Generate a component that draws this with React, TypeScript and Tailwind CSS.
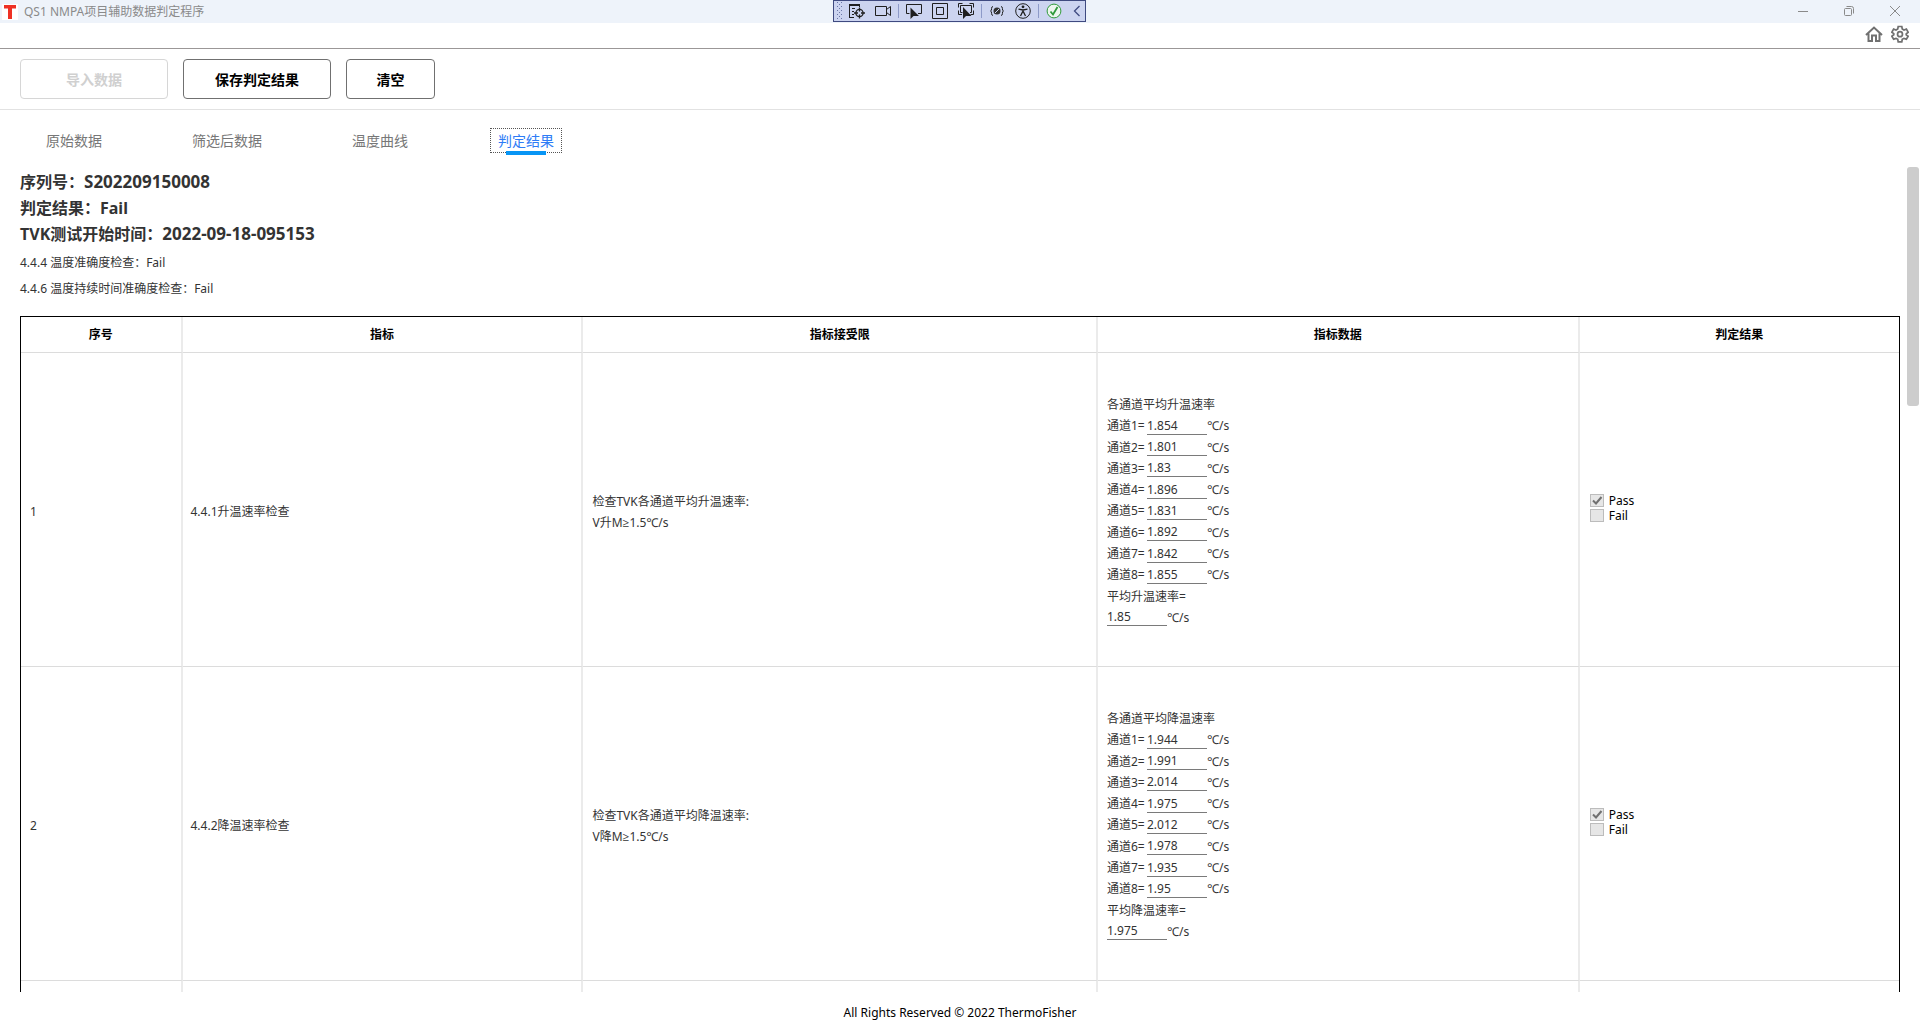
import type { ReactNode } from 'react';

const cjk = "font-['Noto_Sans','Open_Sans','Noto_Sans_CJK_SC',sans-serif]";

type Row = {
  id: number;
  name: string;
  limit: string[];
  title: string;
  values: string[];
  avgLabel: string;
  avg: string;
};

const rows: Row[] = [
  {
    id: 1,
    name: '4.4.1升温速率检查',
    limit: ['检查TVK各通道平均升温速率:', 'V升M≥1.5℃/s'],
    title: '各通道平均升温速率',
    values: ['1.854', '1.801', '1.83', '1.896', '1.831', '1.892', '1.842', '1.855'],
    avgLabel: '平均升温速率=',
    avg: '1.85',
  },
  {
    id: 2,
    name: '4.4.2降温速率检查',
    limit: ['检查TVK各通道平均降温速率:', 'V降M≥1.5℃/s'],
    title: '各通道平均降温速率',
    values: ['1.944', '1.991', '2.014', '1.975', '2.012', '1.978', '1.935', '1.95'],
    avgLabel: '平均降温速率=',
    avg: '1.975',
  },
];

function ToolButton({ label, children }: { label: string; children: ReactNode }) {
  return (
    <button type="button" aria-label={label} className="flex h-[18px] w-[26px] shrink-0 items-center justify-center">
      {children}
    </button>
  );
}

function ToolDivider() {
  return <span className="mx-[2px] h-[14px] w-px shrink-0 bg-[#8d9ac8]" />;
}

const toolSvg = { width: 18, height: 18, viewBox: '0 0 18 18', fill: 'none', stroke: '#1f1f1f' };

function DebugToolbar() {
  return (
    <div className="absolute top-0 left-[833px] flex h-[22px] w-[253px] items-center overflow-hidden border border-[#3f4a80] bg-[#ccd4f0] pl-[3px]">
      <svg className="mr-[1px] shrink-0" width="6" height="18" viewBox="0 0 6 18" fill="#6b76a6">
        {[0, 4, 8, 12, 16].map((y) => (
          <g key={y}>
            <rect x="0" y={y} width="1" height="1" />
            <rect x="4" y={y} width="1" height="1" />
            <rect x="2" y={y + 2} width="1" height="1" />
          </g>
        ))}
      </svg>
      <ToolButton label="Live Visual Tree">
        <svg {...toolSvg}>
          <path d="M1.500 15.500V2.500H11.500V5" />
          <path d="M1 3H12" strokeWidth="2" />
          <path d="M4 6.500H7M4 9.500H6M4 12.500H6M1 15.500H6" />
          <circle cx="11.500" cy="11" r="3.600" strokeWidth="1.300" />
          <path d="M11.500 5.500V9.500M11.500 12.500V16.500M6 11H10M13 11H17" strokeWidth="1.300" />
        </svg>
      </ToolButton>
      <ToolButton label="Record">
        <svg {...toolSvg}>
          <path d="M1.500 4.500H12.500V13.500H1.500Z" />
          <path d="M12.500 7.500L16.500 4.500V13.500L12.500 10.500" />
        </svg>
      </ToolButton>
      <ToolDivider />
      <ToolButton label="Select element">
        <svg {...toolSvg}>
          <path d="M4.500 11.500H1.500V2.500H16.500V11.500H13" />
          <path d="M5.500 5.500V17L8.500 14H14Z" fill="#1f1f1f" stroke="none" />
        </svg>
      </ToolButton>
      <ToolButton label="Layout adorners">
        <svg {...toolSvg}>
          <path d="M1.500 1.500H16.500V16.500H1.500ZM5.500 5.500H12.500V12.500H5.500Z" />
        </svg>
      </ToolButton>
      <ToolButton label="Track focused element">
        <svg {...toolSvg}>
          <path d="M1.500 5.500V1.500H5.500M12.500 1.500H16.500V5.500M1.500 8.500V12.500H5M16.500 8.500V12.500H13.500M5.500 10.500H3.500V3.500H14.500V10.500H13" />
          <path d="M6 5V17L9 14H14.500Z" fill="#1f1f1f" stroke="none" />
        </svg>
      </ToolButton>
      <ToolDivider />
      <ToolButton label="Binding failures">
        <svg {...toolSvg}>
          <path d="M5 4.500C2.500 4.500 4.500 8.500 2.500 9C4.500 9.500 2.500 13.500 5 13.500M13 4.500C15.500 4.500 13.500 8.500 15.500 9C13.500 9.500 15.500 13.500 13 13.500" />
          <circle cx="9" cy="9" r="3.500" fill="#333" stroke="none" />
          <path d="M7 11L11 7" stroke="#ccd4f0" />
        </svg>
      </ToolButton>
      <ToolButton label="Accessibility">
        <svg {...toolSvg}>
          <circle cx="9" cy="9" r="7.300" />
          <circle cx="9" cy="4.800" r="1.400" fill="#1f1f1f" stroke="none" />
          <path d="M4.500 7.200L9 8L13.500 7.200M9 7.500V10.500M6.500 14L8.500 10H9.500L11.500 14" strokeWidth="1.300" />
        </svg>
      </ToolButton>
      <ToolDivider />
      <ToolButton label="Hot reload">
        <svg {...toolSvg} stroke="#2f9a3a">
          <circle cx="9" cy="9" r="6.900" fill="#edf6ee" />
          <path d="M5.500 9.500L8 12.500L12.500 5" strokeWidth="1.800" />
        </svg>
      </ToolButton>
      <button type="button" aria-label="Collapse" className="flex h-[18px] w-[20px] shrink-0 items-center justify-center">
        <svg {...toolSvg} stroke="#3f4a80">
          <path d="M11.500 4L6.500 9L11.500 14" strokeWidth="1.300" />
        </svg>
      </button>
    </div>
  );
}

function TitleBar() {
  return (
    <header className="relative flex h-[23px] shrink-0 items-center bg-[#eef3fa] pr-[2px] pl-[2px]">
      <svg width="16" height="16" viewBox="0 0 16 16">
        <rect width="16" height="16" fill="#fff" />
        <path d="M2 1H14V4.500H10V15H6V4.500H2Z" fill="#ee3124" />
      </svg>
      <h1 className="ml-[6px] text-[12px] leading-[16px] text-[#8a8a8a]">QS1 NMPA项目辅助数据判定程序</h1>
      <DebugToolbar />
      <div className="ml-auto flex h-full pb-[2px] text-[#8a8a8a]">
        <button type="button" aria-label="Minimize" className="flex w-[46px] items-center justify-center">
          <svg width="10" height="10" viewBox="0 0 10 10" stroke="currentColor"><path d="M0 5.500H10" /></svg>
        </button>
        <button type="button" aria-label="Restore" className="flex w-[46px] items-center justify-center">
          <svg width="10" height="10" viewBox="0 0 10 10" fill="none" stroke="currentColor">
            <rect x="0.500" y="2.500" width="7" height="7" rx="1" />
            <path d="M2.500 0.500H7.500Q9.500 0.500 9.500 2.500V7.500" />
          </svg>
        </button>
        <button type="button" aria-label="Close" className="flex w-[46px] items-center justify-center">
          <svg width="10" height="10" viewBox="0 0 10 10" stroke="currentColor"><path d="M0 0L10 10M10 0L0 10" /></svg>
        </button>
      </div>
    </header>
  );
}

function Reading({ id, label, value }: { id: string; label?: string; value: string }) {
  return (
    <div className="flex items-center">
      {label && <label htmlFor={id} className="w-[40px] whitespace-nowrap">{label}</label>}
      <input
        id={id}
        aria-label={label ? undefined : '平均'}
        readOnly
        defaultValue={value}
        className="h-[17px] w-[60px] border-b border-[#7a7a7a] bg-transparent pb-[1px] outline-none"
      />
      <span>℃/s</span>
    </div>
  );
}

function Verdict({ label, checked }: { label: string; checked: boolean }) {
  return (
    <label className="flex h-[15px] items-center gap-[5px] text-black">
      <span className="relative flex size-[14px]">
        <input
          type="checkbox"
          disabled
          defaultChecked={checked}
          className="h-[13px] w-[14px] appearance-none border border-[#bcbcbc] bg-[#e6e6e6]"
        />
        {checked && (
          <svg className="absolute top-0 left-0" width="14" height="13" viewBox="0 0 14 13" fill="none" stroke="#707070" strokeWidth="2">
            <path d="M3 6.500L6 9.500L11.500 3" />
          </svg>
        )}
      </span>
      {label}
    </label>
  );
}

export default function App() {
  const divider = 'border-r-2 border-b border-r-[#ebebeb] border-b-[#dcdcdc]';
  const lastCol = 'border-b border-b-[#dcdcdc]';
  return (
    <div className={`${cjk} flex h-screen flex-col overflow-hidden bg-white text-[12px] leading-[16px] text-[#333]`}>
      <TitleBar />
      <div className="flex h-[26px] shrink-0 items-center justify-end gap-[8px] border-b border-[#9b9797] pr-[11px] pb-[3px] text-[#707070]">
        <button type="button" aria-label="Home">
          <svg width="18" height="18" viewBox="0 0 18 18" fill="none" stroke="currentColor" strokeWidth="2">
            <path d="M1 10L9 2.500L17 10M3.500 8.500V16H7V10.500H11V16H14.500V8.500" />
          </svg>
        </button>
        <button type="button" aria-label="Settings">
          <svg width="18" height="18" viewBox="0 0 24 24" fill="none" stroke="currentColor" strokeWidth="2.300">
            <path d="M9.600 2H14.400L15 5.300L17.300 6.600L20.500 5.500L22.900 9.600L20.300 11.800V13.200L22.900 14.900L20.500 18.900L17.300 17.800L15 19.100L14.400 22.500H9.600L9 19.100L6.700 17.800L3.500 18.900L1.100 14.900L3.700 13V11.500L1.100 9.600L3.500 5.500L6.700 6.600L9 5.300Z" />
            <circle cx="12" cy="12.200" r="3.300" />
          </svg>
        </button>
      </div>
      <div className="flex h-[61px] shrink-0 items-center gap-[15px] border-b border-[#e2e2e2] px-[20px] text-[14px] font-bold">
        <button type="button" disabled className="h-[40px] w-[148px] rounded-[4px] border border-[#d6d6d6] pt-[2px] text-[#d0d0d0]">导入数据</button>
        <button type="button" className="h-[40px] w-[148px] rounded-[4px] border border-[#707070] pt-[2px] text-black">保存判定结果</button>
        <button type="button" className="h-[40px] w-[89px] rounded-[4px] border border-[#707070] pt-[2px] text-black">清空</button>
      </div>
      <nav className="flex h-[57px] shrink-0 items-center pt-[4px] pl-[38px] text-[14px] leading-[20px] text-[#777]">
        <button type="button" className="w-[72px]">原始数据</button>
        <button type="button" className="ml-[74px] w-[86px]">筛选后数据</button>
        <button type="button" className="ml-[74px] w-[72px]">温度曲线</button>
        <button type="button" className="relative ml-[74px] h-[25px] w-[72px] text-[#2e7cf6] outline-1 -outline-offset-1 outline-[#555] outline-dotted">
          判定结果
          <span className="absolute bottom-[-2px] left-[16px] h-[4px] w-[40px] bg-[#0795f5]" />
        </button>
      </nav>
      <div className="relative min-h-0 grow overflow-hidden px-[20px] pt-[2px]">
        <div className="text-[16px] leading-[26px] font-bold">
          <p>序列号：<span className="text-[17px]">S202209150008</span></p>
          <p>判定结果：Fail</p>
          <p>TVK测试开始时间：<span className="text-[17px]">2022-09-18-095153</span></p>
        </div>
        <div className="pt-[3px] leading-[26px]">
          <p>4.4.4 温度准确度检查：Fail</p>
          <p>4.4.6 温度持续时间准确度检查：Fail</p>
        </div>
        <table className="mt-[14px] w-full table-fixed border-separate border-spacing-0 border border-black">
          <colgroup>
            <col className="w-[8.6%]" />
            <col className="w-[21.35%]" />
            <col className="w-[27.4%]" />
            <col className="w-[25.65%]" />
            <col className="w-[17%]" />
          </colgroup>
          <thead>
            <tr className="h-[36px]">
              {['序号', '指标', '指标接受限', '指标数据', '判定结果'].map((h, i) => (
                <th key={h} className={`${i < 4 ? divider : lastCol} font-bold text-black`}>{h}</th>
              ))}
            </tr>
          </thead>
          <tbody>
            {rows.map((r) => (
              <tr key={r.id} className="h-[314px]">
                <td className={`${divider} px-[9px] pt-[4px]`}>{r.id}</td>
                <td className={`${divider} px-[8px] pt-[4px]`}>{r.name}</td>
                <td className={`${divider} px-[9px] pt-[4px] leading-[21px]`}>
                  {r.limit.map((l) => <p key={l}>{l}</p>)}
                </td>
                <td className={`${divider} px-[9px] pt-[4px]`}>
                  <div className="grid h-[234px] auto-rows-fr items-center">
                    <p>{r.title}</p>
                    {r.values.map((v, i) => (
                      <Reading key={i} id={`r${r.id}-c${i + 1}`} label={`通道${i + 1}=`} value={v} />
                    ))}
                    <p>{r.avgLabel}</p>
                    <Reading id={`r${r.id}-avg`} value={r.avg} />
                  </div>
                </td>
                <td className={`${lastCol} px-[10px] pb-[2px]`}>
                  <Verdict label="Pass" checked />
                  <Verdict label="Fail" checked={false} />
                </td>
              </tr>
            ))}
            <tr className="h-[314px]">
              {[0, 1, 2, 3].map((c) => <td key={c} className={divider} />)}
              <td className={lastCol} />
            </tr>
          </tbody>
        </table>
        <div className="absolute top-0 right-[1px] h-[239px] w-[12px] rounded-[3px] bg-[#cdcdcd]" />
      </div>
      <footer className="flex h-[39px] shrink-0 items-center justify-center pt-[2px] text-black">
        <p>All Rights Reserved © 2022 ThermoFisher</p>
      </footer>
    </div>
  );
}
